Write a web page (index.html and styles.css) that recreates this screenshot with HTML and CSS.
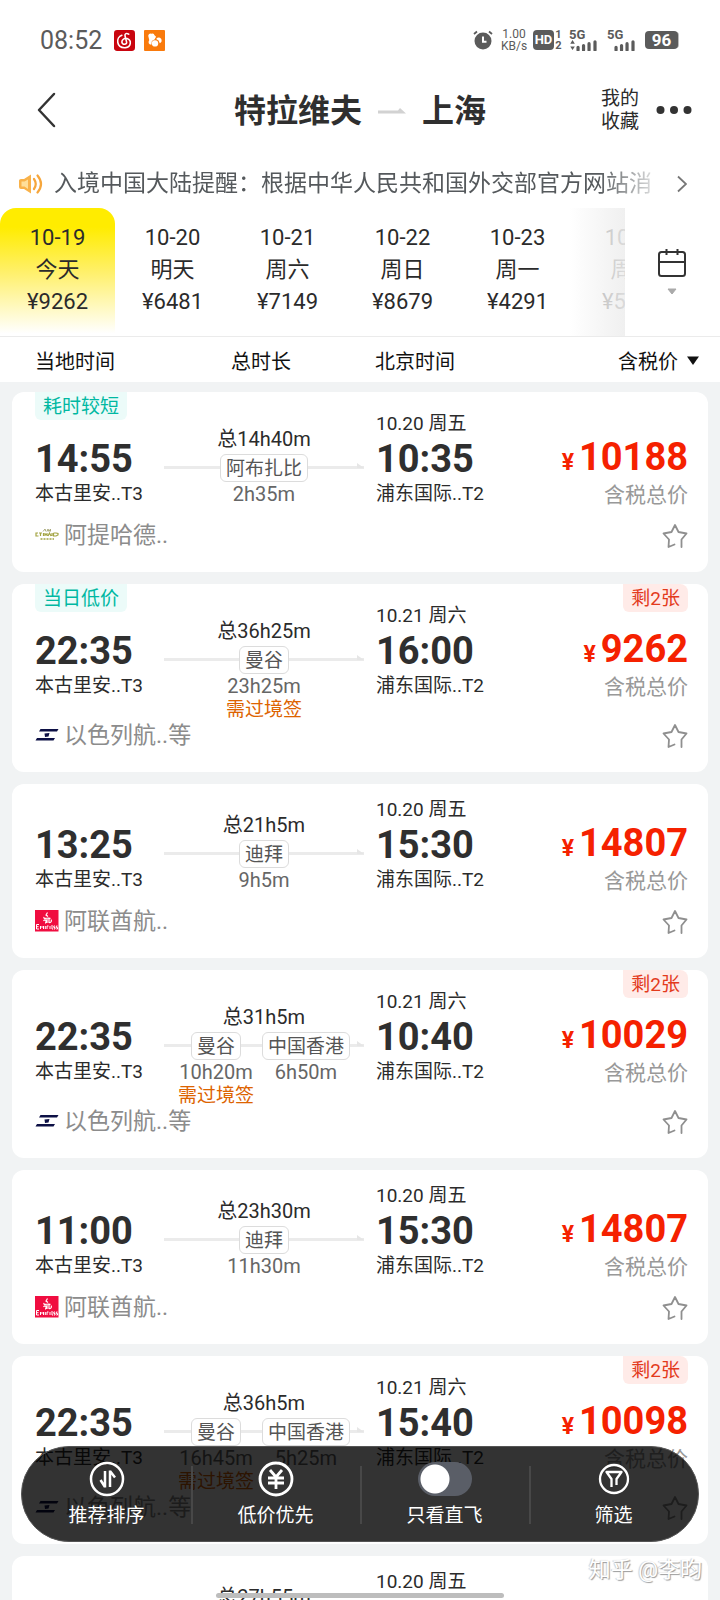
FILE: index.html
```html
<!DOCTYPE html>
<html lang="zh-CN">
<head>
<meta charset="utf-8">
<meta name="viewport" content="width=device-width, initial-scale=1">
<title>特拉维夫 — 上海</title>
<link rel="stylesheet" href="styles.css">
</head>
<body>
<svg class="defs" aria-hidden="true">
  <symbol id="star" viewBox="0 0 26 26">
    <path d="M12.500 21.500L6.500 24L7 16.500L1.500 10.500L9.500 9L13 2L16.500 9L24.500 10.500L19.500 16.500V24" fill="none" stroke="#8f8f8f" stroke-width="1.800" stroke-linejoin="round" stroke-linecap="round"/>
  </symbol>
  <symbol id="elal" viewBox="0 0 24 24">
    <path d="M5.500 6H23.500L22 8.500H4Z M2 15H20L18.500 17.500H.5Z M9.500 10.500L14.500 10L13.500 13.500L10 14Z" fill="#0d1045"/>
  </symbol>
  <symbol id="emirates" viewBox="0 0 24 24">
    <path d="M0 1H23.500V22.500H0Z" fill="#f00d40"/>
    <path d="M12.500 3.500L11 6L13 7.500M9 8C8 11 14 8 15.500 9.500M8.500 12C11 8.500 12 14 10 14M12 10V14M14 9V13.500C16 14 17 12 16 10.500" fill="none" stroke="#fff" stroke-width="1.200"/>
    <path d="M4 15.500H1.500V20H4M1.500 17.700H3.500M5.500 20V17L7 18.500L8.500 17V20M10.300 17V20M12 20V17H13.500M15 17V20M17 16V20H18M20 17H18.800V18.500H20V20H18.800M22.500 17H21.300V18.500H22.500V20H21.300" fill="none" stroke="#fff" stroke-width="1"/>
  </symbol>
  <symbol id="etihad" viewBox="0 0 24 24">
    <path d="M8 8.500L10 6L11 8.500M12 8.500L13 6L14 8.500L15.500 6V8.500" fill="none" stroke="#a9a97a" stroke-width="1"/>
    <path d="M3 10H1V13H3.500M4 10H7M5.500 10V13M8.500 10V13M10 10V13M12 10V13M10 11.500H12M13 13L14.500 10L16 13M17 10V13M18.500 10V13H21L23 12V10.500L21 10H18.500" fill="none" stroke="#a3a443" stroke-width="1.200"/>
    <path d="M5.500 16H19" stroke="#a3a443" stroke-width="1.500" stroke-dasharray="2 1"/>
  </symbol>
</svg>

<div class="screen">
  <div class="status">
    <span class="clock">08:52</span>
    <svg class="app-icon" viewBox="0 0 20 20"><rect width="20" height="20" rx="3" fill="#c9050f"/><path d="M14 4C12 2.500 10 3.500 10.500 5.500L12 11.500C12.500 14 8 14.500 7.500 11.500C7.500 9 10 7.500 12.500 8C17 9.500 16.500 16 11 16.800C2 17.500 1.500 7 7.500 5" fill="none" stroke="#fff" stroke-width="1.500" stroke-linecap="round"/></svg>
    <svg class="app-icon app-gap" viewBox="0 0 20 20"><rect width="20" height="20" rx="1" fill="#f97a0c"/><path d="M4 5.500Q4.500 3 7 3.500Q9.500 2.500 10 5L11.500 6.500L10 9L7.500 10.500L7 14Q3 13.500 5 9.500Z" fill="#fff"/><circle cx="10.500" cy="12.800" r="3" fill="#fff"/><path d="M11.500 8.500Q14 6 16.500 8.500Q17.500 11.500 15 12.500Q14.500 9.500 11.500 8.500Z" fill="#fff"/></svg>
    <span class="spacer"></span>
    <svg class="alarm" viewBox="0 0 20 20"><circle cx="10" cy="11" r="8.500" fill="#5b5b5b"/><path d="M10 6.500V11.800H13.500" fill="none" stroke="#fff" stroke-width="2"/><path d="M1 4L4 1.500M19 4L16 1.500" stroke="#5b5b5b" stroke-width="1.800"/></svg>
    <span class="speed">1.00<br>KB/s</span>
    <span class="hd">HD</span>
    <span class="sim">1<br>2</span>
    <span class="signal"><b>5G</b><svg viewBox="0 0 30 12"><path d="M0 4L2.500 0L5 4ZM0 7H5L2.500 11Z" fill="#5b5b5b"/><path d="M8.500 11V8M14.500 11V6M20.500 11V4M27 11V2" stroke="#5b5b5b" stroke-width="3.500" stroke-linecap="round"/></svg></span>
    <span class="signal"><b>5G</b><svg viewBox="0 0 30 12"><path d="M8.500 11V8M14.500 11V6M20.500 11V4M27 11V2" stroke="#5b5b5b" stroke-width="3.500" stroke-linecap="round"/></svg></span>
    <span class="battery">96</span>
  </div>

  <header class="titlebar">
    <button class="back" aria-label="返回"><svg viewBox="0 0 20 36"><path d="M18 2L3 18L18 34" fill="none" stroke="#333" stroke-width="2.500" stroke-linecap="round" stroke-linejoin="round"/></svg></button>
    <h1><span>特拉维夫</span><svg class="to" viewBox="0 0 28 8"><path d="M0 3.500H20L22 1L28 6.500H0Z" fill="#d2d2d2"/></svg><span>上海</span></h1>
    <div class="actions">
      <a href="#" class="fav">我的<br>收藏</a>
      <button class="more" aria-label="更多"><svg viewBox="0 0 36 10"><g fill="#333"><circle cx="4.500" cy="5" r="4"/><circle cx="18" cy="5" r="4"/><circle cx="31.500" cy="5" r="4"/></g></svg></button>
    </div>
  </header>

  <a href="#" class="notice">
    <svg class="horn" viewBox="0 0 26 22"><path d="M1 7.500Q1 6 3 6H6L13 1.500V20.500L6 16H3Q1 16 1 14Z" fill="#f9b24a"/><path d="M3.500 8.500H6.500L10 6.500V16L6.500 13.500H3.500Z" fill="#ffdf9a"/><path d="M16 6Q19.500 11 16 16M19.500 2.500Q26.500 11 19.500 19.500" fill="none" stroke="#f6a63c" stroke-width="2.200" stroke-linecap="round"/></svg>
    <span class="notice-text">入境中国大陆提醒：根据中华人民共和国外交部官方网站消</span>
    <svg class="chev" viewBox="0 0 10 18"><path d="M1 1.500L9 9L1 16.500" fill="none" stroke="#777" stroke-width="1.800"/></svg>
  </a>

  <nav class="dates">
    <div class="strip">
      <button class="day active"><span>10-19</span><span>今天</span><span>¥9262</span></button>
      <button class="day"><span>10-20</span><span>明天</span><span>¥6481</span></button>
      <button class="day"><span>10-21</span><span>周六</span><span>¥7149</span></button>
      <button class="day"><span>10-22</span><span>周日</span><span>¥8679</span></button>
      <button class="day"><span>10-23</span><span>周一</span><span>¥4291</span></button>
      <button class="day"><span>10-24</span><span>周二</span><span>¥5291</span></button>
    </div>
    <button class="calendar" aria-label="日历">
      <svg viewBox="0 0 30 48"><rect x="2" y="4" width="26" height="24" rx="2.500" fill="none" stroke="#333" stroke-width="2"/><path d="M2 14H28M9.500 1V7M20.500 1V7" stroke="#333" stroke-width="2"/><path d="M11 41H19L15 46Z" fill="#aaa" stroke="#aaa" stroke-linejoin="round"/></svg>
    </button>
  </nav>

  <div class="columns">
    <span>当地时间</span><span>总时长</span><span>北京时间</span>
    <button class="sort">含税价<svg viewBox="0 0 14 10"><path d="M1 0.500H13L7 9Z" fill="#111"/></svg></button>
  </div>

  <main class="list">
    <article class="card tagged">
      <span class="tag">耗时较短</span>
      <div class="trip">
        <div class="depart"><div class="time">14:55</div><div class="port">本古里安..T3</div></div>
        <div class="route"><div class="total">总14h40m</div><div class="stops"><div class="stop"><span class="chip">阿布扎比</span><span class="wait">2h35m</span></div></div></div>
        <div class="arrive"><div class="date">10.20 周五</div><div class="time">10:35</div><div class="port">浦东国际..T2</div></div>
        <div class="cost"><div class="price"><small>¥</small>10188</div><div class="tax">含税总价</div></div>
      </div>
      <div class="airline"><svg class="logo"><use href="#etihad"/></svg><span>阿提哈德..</span><button class="star" aria-label="收藏"><svg><use href="#star"/></svg></button></div>
    </article>

    <article class="card tagged">
      <span class="tag">当日低价</span><span class="left">剩2张</span>
      <div class="trip">
        <div class="depart"><div class="time">22:35</div><div class="port">本古里安..T3</div></div>
        <div class="route"><div class="total">总36h25m</div><div class="stops"><div class="stop"><span class="chip">曼谷</span><span class="wait">23h25m</span><span class="visa">需过境签</span></div></div></div>
        <div class="arrive"><div class="date">10.21 周六</div><div class="time">16:00</div><div class="port">浦东国际..T2</div></div>
        <div class="cost"><div class="price"><small>¥</small>9262</div><div class="tax">含税总价</div></div>
      </div>
      <div class="airline"><svg class="logo"><use href="#elal"/></svg><span>以色列航..等</span><button class="star" aria-label="收藏"><svg><use href="#star"/></svg></button></div>
    </article>

    <article class="card">
      <div class="trip">
        <div class="depart"><div class="time">13:25</div><div class="port">本古里安..T3</div></div>
        <div class="route"><div class="total">总21h5m</div><div class="stops"><div class="stop"><span class="chip">迪拜</span><span class="wait">9h5m</span></div></div></div>
        <div class="arrive"><div class="date">10.20 周五</div><div class="time">15:30</div><div class="port">浦东国际..T2</div></div>
        <div class="cost"><div class="price"><small>¥</small>14807</div><div class="tax">含税总价</div></div>
      </div>
      <div class="airline"><svg class="logo"><use href="#emirates"/></svg><span>阿联酋航..</span><button class="star" aria-label="收藏"><svg><use href="#star"/></svg></button></div>
    </article>

    <article class="card tagged">
      <span class="left">剩2张</span>
      <div class="trip">
        <div class="depart"><div class="time">22:35</div><div class="port">本古里安..T3</div></div>
        <div class="route"><div class="total">总31h5m</div><div class="stops"><div class="stop"><span class="chip">曼谷</span><span class="wait">10h20m</span><span class="visa">需过境签</span></div><div class="stop"><span class="chip">中国香港</span><span class="wait">6h50m</span></div></div></div>
        <div class="arrive"><div class="date">10.21 周六</div><div class="time">10:40</div><div class="port">浦东国际..T2</div></div>
        <div class="cost"><div class="price"><small>¥</small>10029</div><div class="tax">含税总价</div></div>
      </div>
      <div class="airline"><svg class="logo"><use href="#elal"/></svg><span>以色列航..等</span><button class="star" aria-label="收藏"><svg><use href="#star"/></svg></button></div>
    </article>

    <article class="card">
      <div class="trip">
        <div class="depart"><div class="time">11:00</div><div class="port">本古里安..T3</div></div>
        <div class="route"><div class="total">总23h30m</div><div class="stops"><div class="stop"><span class="chip">迪拜</span><span class="wait">11h30m</span></div></div></div>
        <div class="arrive"><div class="date">10.20 周五</div><div class="time">15:30</div><div class="port">浦东国际..T2</div></div>
        <div class="cost"><div class="price"><small>¥</small>14807</div><div class="tax">含税总价</div></div>
      </div>
      <div class="airline"><svg class="logo"><use href="#emirates"/></svg><span>阿联酋航..</span><button class="star" aria-label="收藏"><svg><use href="#star"/></svg></button></div>
    </article>

    <article class="card tagged">
      <span class="left">剩2张</span>
      <div class="trip">
        <div class="depart"><div class="time">22:35</div><div class="port">本古里安..T3</div></div>
        <div class="route"><div class="total">总36h5m</div><div class="stops"><div class="stop"><span class="chip">曼谷</span><span class="wait">16h45m</span><span class="visa">需过境签</span></div><div class="stop"><span class="chip">中国香港</span><span class="wait">5h25m</span></div></div></div>
        <div class="arrive"><div class="date">10.21 周六</div><div class="time">15:40</div><div class="port">浦东国际..T2</div></div>
        <div class="cost"><div class="price"><small>¥</small>10098</div><div class="tax">含税总价</div></div>
      </div>
      <div class="airline"><svg class="logo"><use href="#elal"/></svg><span>以色列航..等</span><button class="star" aria-label="收藏"><svg><use href="#star"/></svg></button></div>
    </article>

    <article class="card">
      <div class="trip">
        <div class="depart"></div>
        <div class="route"><div class="total">总27h55m</div></div>
        <div class="arrive"><div class="date">10.20 周五</div></div>
        <div class="cost"></div>
      </div>
    </article>
  </main>

  <div class="toolbar">
    <button class="tool"><svg viewBox="0 0 36 36"><g fill="none" stroke="#fff" stroke-width="2.500"><circle cx="18" cy="18" r="16"/><path d="M16 10V26.500M16 26L11.500 19M21 26V9.500M21 10L26 16.500"/></g></svg><span>推荐排序</span></button>
    <button class="tool"><svg viewBox="0 0 36 36"><g fill="none" stroke="#fff" stroke-width="2.800"><circle cx="18" cy="18" r="16"/><path d="M12 9L18 16L24 9M10 17H26M10 22H26M18 16V28"/></g></svg><span>低价优先</span></button>
    <label class="tool"><input type="checkbox" class="switch"><span>只看直飞</span></label>
    <button class="tool"><svg viewBox="0 0 36 36"><g fill="none" stroke="#fff" stroke-width="2.300" stroke-linejoin="round"><circle cx="18" cy="18" r="14"/><path d="M15.500 26V18L10.500 11H25.500L20.500 18V24"/></g></svg><span>筛选</span></button>
  </div>
  <div class="watermark">知乎 @李昀</div>
  <div class="home"></div>
</div>
</body>
</html>
```
FILE: styles.css
```css
* { box-sizing: border-box; }
body {
  margin: 0;
  background: #fff;
  color: #2b2b2b;
  font-family: Roboto, "Noto Sans CJK SC", sans-serif;
  font-size: 20px;
}
button {
  border: 0;
  padding: 0;
  background: none;
  color: inherit;
  font: inherit;
}
a { color: inherit; text-decoration: none; }
svg { display: block; }
.defs { position: absolute; width: 0; height: 0; }
.screen {
  position: relative;
  height: 100vh;
  overflow: hidden;
  display: flex;
  flex-direction: column;
  background: #f1f3f4;
}
.status, .titlebar, .notice, .dates, .columns { flex: none; background: #fff; }

/* status bar */
.status {
  display: flex;
  align-items: center;
  height: 80px;
  padding: 0 42px 0 40px;
  color: #5b5b5b;
}
.clock { font-size: 25px; margin-right: 12px; }
.app-icon { width: 21px; height: 21px; }
.app-gap { margin-left: 9px; }
.spacer { flex: 1; }
.alarm { width: 20px; height: 20px; margin-right: 8px; }
.speed { width: 26px; font-size: 12px; line-height: 12px; text-align: center; margin-right: 6px; }
.hd {
  width: 21px;
  height: 20px;
  border-radius: 4px;
  background: #5b5b5b;
  color: #fff;
  font-size: 13px;
  font-weight: 700;
  line-height: 20px;
  text-align: center;
}
.sim { width: 9px; margin-right: 6px; font-size: 11px; font-weight: 700; line-height: 11px; text-align: center; }
.signal { width: 30px; margin-right: 8px; font-size: 13px; line-height: 10px; }
.signal b { display: block; }
.signal svg { width: 30px; height: 11px; }
.battery {
  width: 33px;
  height: 18px;
  border-radius: 4px;
  background: #5b5b5b;
  box-shadow: 2px 0 0 -1px #bbb;
  color: #fff;
  font-size: 17px;
  font-weight: 700;
  line-height: 18px;
  text-align: center;
}

/* title bar */
.titlebar {
  display: grid;
  grid-template-columns: 1fr auto 1fr;
  align-items: center;
  height: 60px;
  padding: 0 28px 0 36px;
}
.back svg { width: 20px; height: 36px; }
h1 {
  display: flex;
  align-items: center;
  gap: 16px;
  margin: 0;
  padding: 2px 8px 0 0;
  color: #2f2f2f;
  font-size: 32px;
  font-weight: 700;
  line-height: 48px;
}
.to { width: 28px; height: 8px; }
.actions { display: flex; align-items: center; justify-content: flex-end; gap: 17px; }
.fav { font-size: 19px; line-height: 23px; }
.more svg { width: 36px; height: 10px; }

/* notice */
.notice {
  display: flex;
  align-items: center;
  height: 68px;
  padding: 19px 33px 0 18px;
  color: #55595c;
}
.horn { flex: none; width: 26px; height: 22px; margin-right: 10px; }
.notice-text {
  flex: 1;
  min-width: 0;
  overflow: hidden;
  white-space: nowrap;
  font-size: 23px;
  line-height: 34px;
  -webkit-mask-image: linear-gradient(to right, #000 91%, rgba(0,0,0,.2));
  mask-image: linear-gradient(to right, #000 91%, rgba(0,0,0,.2));
}
.chev { flex: none; width: 10px; height: 18px; margin-left: 24px; }

/* date strip */
.dates { display: flex; height: 129px; border-bottom: 1px solid #ebebeb; }
.strip { position: relative; flex: 1; display: flex; overflow: hidden; }
.strip::after {
  content: "";
  position: absolute;
  inset: 0 0 0 auto;
  width: 56px;
  background: linear-gradient(to right, rgba(255,255,255,.6), rgba(238,238,238,.9));
}
.day {
  flex: none;
  width: 115px;
  padding-bottom: 4px;
  display: flex;
  flex-direction: column;
  justify-content: center;
  font-size: 22px;
  line-height: 32px;
  text-align: center;
}
.active {
  border-radius: 16px 16px 0 0;
  background: linear-gradient(#ffec00 15%, #fff06a 50%, #fff 98%);
}
.calendar { display: flex; align-items: center; justify-content: center; width: 95px; padding-right: 2px; }
.calendar svg { width: 30px; height: 48px; }

.columns {
  display: grid;
  grid-template-columns: 196fr 144fr 140fr 185fr;
  align-items: center;
  height: 45px;
  padding: 2px 20px 0 35px;
  color: #111;
}
.sort { display: flex; align-items: center; justify-content: flex-end; gap: 8px; }
.sort svg { width: 14px; height: 10px; }

/* flight cards */
.list { display: flex; flex-direction: column; gap: 12px; padding: 10px 12px; }
.card {
  position: relative;
  flex: none;
  padding: 15px 20px 26px 23px;
  border-radius: 12px;
  background: #fff;
}
.tagged { padding-top: 21px; }
.tag, .left {
  position: absolute;
  top: 0;
  height: 28px;
  font-size: 19px;
  line-height: 30px;
  padding: 0 8px;
}
.tag { left: 23px; border-radius: 0 0 6px 6px; background: #ecfbf9; color: #00b8a2; }
.left { right: 20px; border-radius: 0 8px 6px 6px; background: #ffebe8; color: #e33a1c; }
.trip {
  display: grid;
  grid-template-columns: 129fr 200fr 134fr 190fr;
  min-height: 107px;
}
.depart { padding-top: 22px; white-space: nowrap; }
.time {
  color: #2f2f2f;
  font-size: 38px;
  font-weight: 700;
  line-height: 48px;
}
.port { font-size: 19px; line-height: 22px; white-space: nowrap; }
.route { padding-top: 14px; text-align: center; }
.total { line-height: 24px; }
.stops {
  position: relative;
  display: flex;
  justify-content: center;
  gap: 8px;
  margin-top: 3px;
}
.stops::before {
  content: "";
  position: absolute;
  top: 12px;
  left: 0;
  right: 0;
  height: 3px;
  background: #ebebeb;
}
.stops::after {
  content: "";
  position: absolute;
  top: 9px;
  right: 0;
  border-left: 7px solid #e6e6e6;
  border-top: 5px solid transparent;
}
.stop { position: relative; z-index: 1; display: flex; flex-direction: column; align-items: center; }
.chip {
  height: 28px;
  padding: 0 5px;
  border: 1px solid #dcdcdc;
  border-radius: 6px;
  background: #fff;
  color: #555;
  font-size: 19px;
  line-height: 27px;
}
.wait { color: #666; line-height: 25px; }
.visa { color: #dd6300; font-size: 19px; line-height: 21px; }
.arrive { padding-left: 12px; }
.date { font-size: 19px; line-height: 22px; }
.cost { text-align: right; }
.price {
  color: #f52100;
  font-size: 38px;
  font-weight: 700;
  line-height: 48px;
  margin-top: 20px;
}
.price small { margin-right: 5px; font-size: 23px; }
.tax { color: #999; font-size: 21px; line-height: 24px; margin-top: -4px; }
.airline {
  display: flex;
  align-items: center;
  height: 26px;
  color: #8c8c8c;
  font-size: 23px;
}
.logo { width: 24px; height: 24px; margin: 4px 5px 0 0; }
.star { margin: 6px 0 0 auto; }
.star svg { width: 26px; height: 26px; }

/* floating toolbar */
.toolbar {
  position: absolute;
  left: 21px;
  right: 21px;
  bottom: 58px;
  z-index: 2;
  display: flex;
  height: 96px;
  border: 1px solid #555;
  border-radius: 48px;
  background: rgba(0, 0, 0, .8);
  color: #fff;
}
.tool {
  position: relative;
  flex: 1;
  display: flex;
  flex-direction: column;
  align-items: center;
  padding-top: 14px;
  font-size: 19px;
  line-height: 24px;
}
.tool + .tool::before {
  content: "";
  position: absolute;
  left: 0;
  top: 19px;
  width: 2px;
  height: 58px;
  background: #484848;
}
.tool svg { width: 36px; height: 36px; }
.tool span { margin-top: 7px; }
.switch {
  appearance: none;
  width: 54px;
  height: 34px;
  margin: 1px 0;
  border-radius: 17px;
  background: radial-gradient(circle at 17px 17px, #fff 14px, #5a5e67 15px);
}
.watermark {
  position: absolute;
  right: 18px;
  bottom: 15px;
  color: #fff;
  font-size: 22px;
  line-height: 30px;
  text-shadow: 1px 1px 1px #999, -1px 0 1px #ccc;
}
.home {
  position: absolute;
  left: 30%;
  right: 30%;
  bottom: 2px;
  height: 5px;
  border-radius: 3px;
  background: #bdbdbd;
}
```
